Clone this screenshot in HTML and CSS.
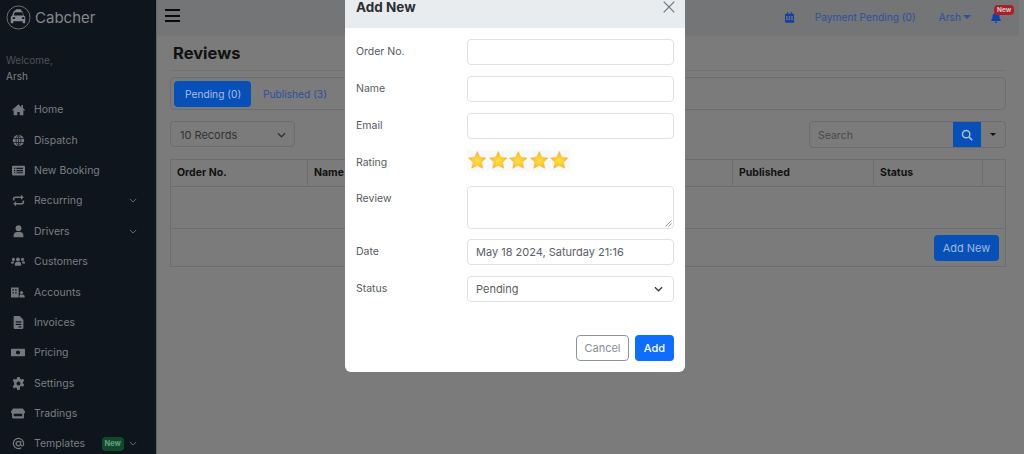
FILE: index.html
```html
<!DOCTYPE html>
<html lang="en">
<head>
<meta charset="utf-8">
<title>Reviews</title>
<link rel="stylesheet" href="styles.css">
</head>
<body>
<div class="app">
  <aside class="sidebar">
    <div class="brand">
      <svg class="logo" viewBox="0 0 26 26"><circle cx="13" cy="13" r="12" fill="none" stroke="currentColor" stroke-width=".8"/><path fill="currentColor" d="M10.5 4.5h5v1.600h1.200l2 5 1.300 1v6.900h-2.600v-2H7.600v2H5V12.100l1.300-1 2-5h1.200zM9.200 7.500 7.900 11h10.200l-1.300-3.500zM7 12.800v1.700h2.500v-1.700zM16.500 12.800v1.700H19v-1.700z"/></svg>
      <span>Cabcher</span>
    </div>
    <div class="welcome">Welcome,</div>
    <div class="username">Arsh</div>
    <nav class="menu">
      <a class="item"><svg class="ic" viewBox="0 0 16 16"><path d="M8 1.500 0 8.500l1 1 1-.8V15h4.500v-4h3v4H14V8.700l1 .8 1-1-2.500-2.200V2.500h-2v3z"/></svg><span>Home</span></a>
      <a class="item"><svg class="ic" viewBox="0 0 16 16"><circle cx="8" cy="8" r="7"/><path d="M1 5.500h14M1 10.500h14M8 1v14M8 1c-4 4-4 10 0 14M8 1c4 4 4 10 0 14" fill="none" stroke="#0f151c" stroke-width=".9"/></svg><span>Dispatch</span></a>
      <a class="item"><svg class="ic" viewBox="0 0 16 16"><path fill-rule="evenodd" d="M1.500 2h13A1.500 1.500 0 0 1 16 3.500v9a1.500 1.500 0 0 1-1.500 1.500h-13A1.500 1.500 0 0 1 0 12.500v-9A1.500 1.500 0 0 1 1.500 2zM2.500 4.500v1.500H4V4.500zM5.500 4.500v1.500h8V4.500zM2.500 7.300v1.500H4V7.300zM5.500 7.300v1.500h8V7.300zM2.500 10v1.500H4V10zM5.500 10v1.500h8V10z"/></svg><span>New Booking</span></a>
      <a class="item"><svg class="ic" viewBox="0 0 16 16"><path d="M3 8V6.500A1.500 1.500 0 0 1 4.500 5H11v2l3.500-3L11 1v2H4.500A3.500 3.500 0 0 0 1 6.500V8zM13 8v1.500a1.500 1.500 0 0 1-1.500 1.500H5V9l-3.500 3L5 15v-2h6.500A3.500 3.500 0 0 0 15 9.500V8z"/></svg><span>Recurring</span><svg class="chev" viewBox="0 0 10 6"><path d="M1 1l4 4 4-4" fill="none" stroke="currentColor" stroke-width="1.200"/></svg></a>
      <a class="item"><svg class="ic" viewBox="0 0 16 16"><circle cx="8" cy="4" r="3.600"/><path d="M2 15v-2.500C2 10 4 8.500 6 8.500h4c2 0 4 1.500 4 4V15z"/></svg><span>Drivers</span><svg class="chev" viewBox="0 0 10 6"><path d="M1 1l4 4 4-4" fill="none" stroke="currentColor" stroke-width="1.200"/></svg></a>
      <a class="item"><svg class="ic wide" viewBox="0 0 20 16"><circle cx="10" cy="5" r="2.800"/><circle cx="3.500" cy="5" r="2.200"/><circle cx="16.500" cy="5" r="2.200"/><path d="M5.500 14v-2c0-2 1.500-3.500 3-3.500h3c1.500 0 3 1.500 3 3.500v2zM0 11V9.500C0 8.500 1 8 2 8h2.500C4 9 4.200 10 4 11zM20 11V9.500c0-1-1-1.500-2-1.500h-2.500c.5 1 .3 2 .5 3z"/></svg><span>Customers</span></a>
      <a class="item"><svg class="ic wide" viewBox="0 0 20 16"><path fill-rule="evenodd" d="M0 1h11v14H0zM2 3.500v2h2v-2zM6 3.500v2h2v-2zM2 7.500v2h2v-2zM6 7.500v2h2v-2z"/><circle cx="15" cy="8" r="2.300"/><path d="M12 15v-2c0-1 1-2 2-2h2.500c1.500 0 3 1 3 2.500V15z"/></svg><span>Accounts</span></a>
      <a class="item"><svg class="ic" viewBox="0 0 16 16"><path fill-rule="evenodd" d="M3 0h6.500L14 4.500V14.500a1.500 1.500 0 0 1-1.500 1.500h-9A1.500 1.500 0 0 1 2 14.500V1a1 1 0 0 1 1-1zM4.500 6.500V8h7V6.500zM4.500 9.500V11h7V9.500zM8 12.500V14h3.500v-1.500z"/></svg><span>Invoices</span></a>
      <a class="item"><svg class="ic wide" viewBox="0 0 20 16"><path fill-rule="evenodd" d="M1 2.500h18a1 1 0 0 1 1 1v9a1 1 0 0 1-1 1H1a1 1 0 0 1-1-1v-9a1 1 0 0 1 1-1zM10 5a3 3 0 1 0 0 6 3 3 0 0 0 0-6z"/></svg><span>Pricing</span></a>
      <a class="item"><svg class="ic" viewBox="0 0 16 16"><path fill-rule="evenodd" d="M6.500 0h3l.5 2.300 1.400.7 2.200-1 1.500 2.600-1.700 1.600v1.600l1.700 1.600-1.500 2.600-2.200-1-1.400.7L9.500 16h-3L6 13.700l-1.400-.7-2.200 1L.9 11.400l1.700-1.600V6.200L.9 4.600 2.400 2l2.200 1L6 2.300zM8 5.500a2.500 2.500 0 1 0 0 5 2.500 2.500 0 0 0 0-5z"/></svg><span>Settings</span></a>
      <a class="item"><svg class="ic wide" viewBox="0 0 20 16"><path fill-rule="evenodd" d="M3 1h14l3 4v1.500c0 1-1 1.500-1.500 1.500v6.500A1.500 1.500 0 0 1 17 15H3a1.500 1.500 0 0 1-1.500-1.500V8C1 8 0 7.500 0 6.500V5zM4 8.500V12h12V8.500z"/></svg><span>Tradings</span></a>
      <a class="item"><svg class="ic" viewBox="0 0 16 16"><path d="M8 1a7 7 0 1 0 3.500 13l-.7-1.300A5.500 5.500 0 1 1 13.500 8v.8c0 .7-.5 1.200-1 1.200s-1-.5-1-1.200V4.800H10v.6A3.500 3.500 0 1 0 10.500 10.500 2.500 2.500 0 0 0 15 8.800V8a7 7 0 0 0-7-7zm0 5a2 2 0 1 1 0 4 2 2 0 0 1 0-4z"/></svg><span>Templates</span><em class="new">New</em><svg class="chev near" viewBox="0 0 10 6"><path d="M1 1l4 4 4-4" fill="none" stroke="currentColor" stroke-width="1.200"/></svg></a>
    </nav>
  </aside>

  <main class="main">
    <header class="topbar">
      <div class="burger"><i></i><i></i><i></i></div>
      <div class="topright">
        <svg class="cal" viewBox="0 0 14 16"><path fill-rule="evenodd" d="M3 0h2v2h4V0h2v2h1.500A1.500 1.500 0 0 1 14 3.500V14.500a1.500 1.500 0 0 1-1.500 1.500h-11A1.500 1.500 0 0 1 0 14.500V3.500A1.500 1.500 0 0 1 1.500 2H3zM1.500 6v2.500h3V6zM5.500 6v2.500h3V6zM9.500 6v2.500h3V6zM1.500 9.500v2.500h3V9.500zM5.500 9.500v2.500h3V9.500zM9.500 9.500v2.500h3V9.500z"/></svg>
        <span class="pay">Payment Pending (0)</span>
        <span class="user">Arsh<b class="caret"></b></span>
        <span class="bell">
          <svg viewBox="0 0 14 16"><path d="M7 0a1 1 0 0 1 1 1v.8A4.500 4.500 0 0 1 12 6.300c0 3.500 1 4.700 2 5.700v1H0v-1c1-1 2-2.200 2-5.700A4.500 4.500 0 0 1 6 1.800V1a1 1 0 0 1 1-1zM5 14h4a2 2 0 0 1-4 0z"/></svg>
          <em class="badge">New</em>
        </span>
      </div>
    </header>

    <section class="content">
      <h1 class="title">Reviews</h1>
      <div class="tabs">
        <a class="tab active">Pending (0)</a>
        <a class="tab">Published (3)</a>
      </div>
      <div class="tools">
        <div class="records">10 Records<svg class="selchev" viewBox="0 0 10 6"><path d="M1 1l4 4 4-4" fill="none" stroke="currentColor" stroke-width="1.400"/></svg></div>
        <div class="search">
          <span class="sinput">Search</span>
          <span class="sbtn"><svg viewBox="0 0 14 14"><circle cx="6" cy="6" r="4.300" fill="none" stroke="currentColor" stroke-width="1.700"/><path d="M9.200 9.200 13 13" stroke="currentColor" stroke-width="1.900"/></svg></span>
          <span class="smore"><b class="caret dark"></b></span>
        </div>
      </div>
      <div class="table">
        <div class="thead">
          <div class="th c1">Order No.</div>
          <div class="th c2">Name</div>
          <div class="th c3">Email</div>
          <div class="th c4">Rating</div>
          <div class="th c5">Published</div>
          <div class="th c6">Status</div>
          <div class="th c7"></div>
        </div>
        <div class="trow"></div>
        <div class="tfoot"><a class="addnew">Add New</a></div>
      </div>
    </section>
  </main>
</div>

<div class="modal">
  <div class="mhead">
    <h2>Add New</h2>
    <svg class="close" viewBox="0 0 12 12"><path d="M.7.700l10.600 10.600M11.300.700.7 11.300" stroke="currentColor" stroke-width="1.200" fill="none"/></svg>
  </div>
  <div class="mbody">
    <div class="row"><label>Order No.</label><div class="field"></div></div>
    <div class="row"><label>Name</label><div class="field"></div></div>
    <div class="row"><label>Email</label><div class="field"></div></div>
    <div class="row rating"><label>Rating</label>
      <div class="stars">
        <svg viewBox="0 0 20 20"><defs><radialGradient id="g" cx=".5" cy=".55" r=".55"><stop offset="0" stop-color="#ffe04a"/><stop offset=".65" stop-color="#ffc41c"/><stop offset="1" stop-color="#f7a414"/></radialGradient></defs><path class="st" d="M10 1.500l2.600 5.500 6 .8-4.400 4.100 1.200 6L10 15l-5.400 2.900 1.200-6L1.400 7.800l6-.8z"/></svg>
        <svg viewBox="0 0 20 20"><path class="st" d="M10 1.500l2.600 5.500 6 .8-4.400 4.100 1.200 6L10 15l-5.400 2.900 1.200-6L1.400 7.800l6-.8z"/></svg>
        <svg viewBox="0 0 20 20"><path class="st" d="M10 1.500l2.600 5.500 6 .8-4.400 4.100 1.200 6L10 15l-5.400 2.900 1.200-6L1.400 7.800l6-.8z"/></svg>
        <svg viewBox="0 0 20 20"><path class="st" d="M10 1.500l2.600 5.500 6 .8-4.400 4.100 1.200 6L10 15l-5.400 2.900 1.200-6L1.400 7.800l6-.8z"/></svg>
        <svg viewBox="0 0 20 20"><path class="st" d="M10 1.500l2.600 5.500 6 .8-4.400 4.100 1.200 6L10 15l-5.400 2.900 1.200-6L1.400 7.800l6-.8z"/></svg>
      </div>
    </div>
    <div class="row review"><label>Review</label><div class="field area"><svg class="grip" viewBox="0 0 7 7"><path d="M6.500.5l-6 6M6.500 3.500l-3 3" stroke="#777" stroke-width=".8"/></svg></div></div>
    <div class="row"><label>Date</label><div class="field val">May 18 2024, Saturday 21:16</div></div>
    <div class="row"><label>Status</label><div class="field val sel">Pending<svg class="selchev" viewBox="0 0 10 6"><path d="M1 1l4 4 4-4" fill="none" stroke="#343a40" stroke-width="1.400"/></svg></div></div>
  </div>
  <div class="mfoot">
    <a class="btn cancel">Cancel</a>
    <a class="btn add">Add</a>
  </div>
</div>
</body>
</html>
```
FILE: styles.css
```css
* { box-sizing: border-box; }
html, body { margin: 0; height: 100%; }
body {
  overflow: hidden;
  background: #7b7b7b;
  font-family: Inter, "Liberation Sans", sans-serif;
  font-size: 11px;
  color: #111;
}
.app { display: flex; height: 454px; overflow: hidden; }

.sidebar {
  position: relative;
  flex: 0 0 156px;
  height: 454px;
  background: #0f151c;
  box-shadow: 1px 0 0 #646565;
  color: #7f8388;
  padding: 5px 0 0 6px;
  overflow: hidden;
}
.brand { display: flex; align-items: center; gap: 4px; height: 25px; font-size: 15px; color: #85898e; }
.logo { width: 25px; height: 25px; flex: none; }
.welcome { margin-top: 24px; font-size: 10px; line-height: 12px; color: #4e5258; }
.username { margin-top: 4px; font-size: 10px; line-height: 12px; color: #7f8388; }
.menu { margin: 12.500px 0 0 -6px; }
.item { display: flex; align-items: center; height: 30.400px; padding-left: 12px; font-size: 10.500px; color: #7a7e83; }
.ic { flex: none; width: 13px; height: 13px; margin-right: 9px; fill: #74787d; }
.ic.wide { width: 14px; margin-left: -1px; margin-right: 9px; }
.chev { width: 8px; height: 5px; margin-left: auto; margin-right: 19px; color: #6c7075; }
.chev.near { margin-left: 5px; }
.new {
  margin-left: auto; font-style: normal; font-weight: 700; font-size: 7.500px;
  color: #6f9a83; background: #0f4a2a; border-radius: 4px; padding: 2px 3px; line-height: 10.500px;
}

.main { flex: 1; min-width: 0; }
.topbar {
  display: flex; align-items: center; justify-content: space-between;
  height: 36px; width: 863px;
  background: #747576;
  padding-left: 9px;
}
.burger { display: grid; gap: 3.500px; width: 15px; align-self: flex-start; margin-top: 9px; }
.burger i { display: block; height: 2px; background: #0a0a0a; }
.topright { display: flex; align-items: center; color: #2f4f9e; font-size: 10.200px; margin-top: -2px; }
.cal { width: 9px; height: 11px; fill: #1040a8; margin-right: 21px; }
.pay { margin-right: 23px; }
.user { display: flex; align-items: center; margin-right: 20px; }
.caret {
  display: inline-block; margin-left: 2px; width: 0; height: 0;
  border: 4px solid transparent; border-top-color: currentColor; border-bottom: 0;
}
.caret.dark { color: #111; margin: 0; border-width: 3.500px; border-bottom: 0; }
.bell { position: relative; display: block; width: 13px; height: 14px; margin-right: 15px; }
.bell svg { display: block; width: 10px; height: 11px; fill: #1040b0; margin: 2px 0 0 0; }
.badge {
  position: absolute; left: 3px; top: -5px;
  background: #a8202a; color: #d8c8c8; font-style: normal; font-weight: 700;
  font-size: 6.500px; line-height: 10px; padding: 0 3px; border-radius: 4px;
}

.content { padding: 0 18px 0 14px; }
.title {
  margin: 0 0 0 3px; padding: 7px 0 7px; font-size: 16.500px; line-height: 20px; font-weight: 700;
  color: #111;
}
.tabs {
  position: relative;
  display: flex; align-items: center; gap: 0;
  height: 33px; margin-top: 7px; padding: 0 3px;
  border: 1px solid #6c6d6e; border-radius: 5px;
}
.tabs::before { content: ""; position: absolute; left: 0; right: 0; top: -8px; border-top: 1px solid #717272; }
.tab { display: flex; align-items: center; height: 26px; padding: 1px 11px 0; font-size: 10.200px; color: #2f4f9e; border-radius: 4px; white-space: nowrap; }
.tab.active { width: 77px; background: #0650b8; color: #a8bfe0; margin-right: 1px; }

.tools { display: flex; justify-content: space-between; margin-top: 11px; }
.records {
  display: flex; align-items: center; justify-content: space-between;
  width: 125px; height: 26px; padding: 2px 8px 0 9px;
  background: #7b7b7b; border: 1px solid #6a6c6e; border-radius: 4px; font-size: 11px; color: #303336;
}
.selchev { width: 9px; height: 6px; flex: none; }
.search { display: flex; width: 197px; height: 27px; border: 1px solid #6a6c6e; border-radius: 4px; overflow: hidden; }
.sinput { flex: 1; display: flex; align-items: center; padding: 1px 0 0 8px; font-size: 10.500px; color: #46494c; }
.sbtn { flex: 0 0 28px; display: flex; align-items: center; justify-content: center; background: #0650b8; color: #a8bfe0; }
.sbtn svg { width: 12px; height: 12px; }
.smore { flex: 0 0 24px; display: flex; align-items: center; justify-content: center; }

.table { margin-top: 11px; border: 1px solid #6c6d6e; width: 836px; }
.thead { display: flex; height: 27px; border-bottom: 1px solid #6a6c6e; }
.th { display: flex; align-items: center; padding: 0 0 1px 6px; font-size: 10.500px; font-weight: 700; color: #111; border-right: 1px solid #6c6d6e; }
.c1 { width: 137px; } .c2 { width: 143px; } .c3 { width: 140px; } .c4 { width: 142px; }
.c5 { width: 141px; } .c6 { width: 109px; } .c7 { flex: 1; border-right: 0; }
.trow { height: 42px; border-bottom: 1px solid #6c6d6e; }
.tfoot { display: flex; justify-content: flex-end; align-items: flex-start; height: 37px; padding: 6px 6px 0 0; }
.addnew {
  display: flex; align-items: center; justify-content: center;
  width: 65px; height: 26px; border-radius: 4px; background: #0650b8; color: #a0b8dc; font-size: 11px;
}

.modal {
  position: fixed; left: 345px; top: -13px; width: 340px; height: 385px;
  background: #fff; border-radius: 6px; overflow: hidden; color: #495057;
  font-size: 10.500px;
}
.mhead {
  display: flex; align-items: flex-end; justify-content: space-between;
  height: 41px; padding: 0 10px 13px 11px; background: #e9ecef;
}
.mhead h2 { margin: 0; font-size: 13.500px; line-height: 16px; font-weight: 700; color: #2b2f33; }
.close { width: 12px; height: 12px; color: #6c757d; margin-bottom: 2px; }
.mbody { padding: 11px 11px 0; }
.row { display: flex; align-items: center; height: 26px; margin-bottom: 11px; }
.row label { flex: 0 0 111px; margin-top: -2px; color: #555b61; }
.field { flex: none; width: 207px; height: 26px; background: #fff; border: 1px solid #dee2e6; border-radius: 4px; }
.val { display: flex; align-items: center; padding-left: 8px; color: #5a6067; font-size: 11px; }
.sel { justify-content: space-between; padding-right: 10px; }
.rating { height: 22px; margin-bottom: 14px; align-items: flex-start; }
.rating label { margin-top: 6px; }
.stars { display: flex; }
.stars svg { width: 20.500px; height: 20.500px; background: #f8f9fa; }
.st { fill: url(#g); stroke: #efb95e; stroke-width: .5; stroke-linejoin: round; }
.review { height: 43px; align-items: flex-start; margin-bottom: 10px; }
.review label { margin-top: 6px; }
.area { position: relative; height: 43px; }
.grip { position: absolute; right: 1px; bottom: 1px; width: 7px; height: 7px; }
.mfoot { display: flex; justify-content: flex-end; gap: 6px; padding: 22px 11px 0 0; }
.btn { display: flex; align-items: center; justify-content: center; height: 26px; border-radius: 4px; font-size: 11px; }
.cancel { width: 53px; border: 1px solid #8d959c; color: #868e96; }
.add { width: 39px; background: #0d6efd; color: #fff; font-weight: 500; }
```
